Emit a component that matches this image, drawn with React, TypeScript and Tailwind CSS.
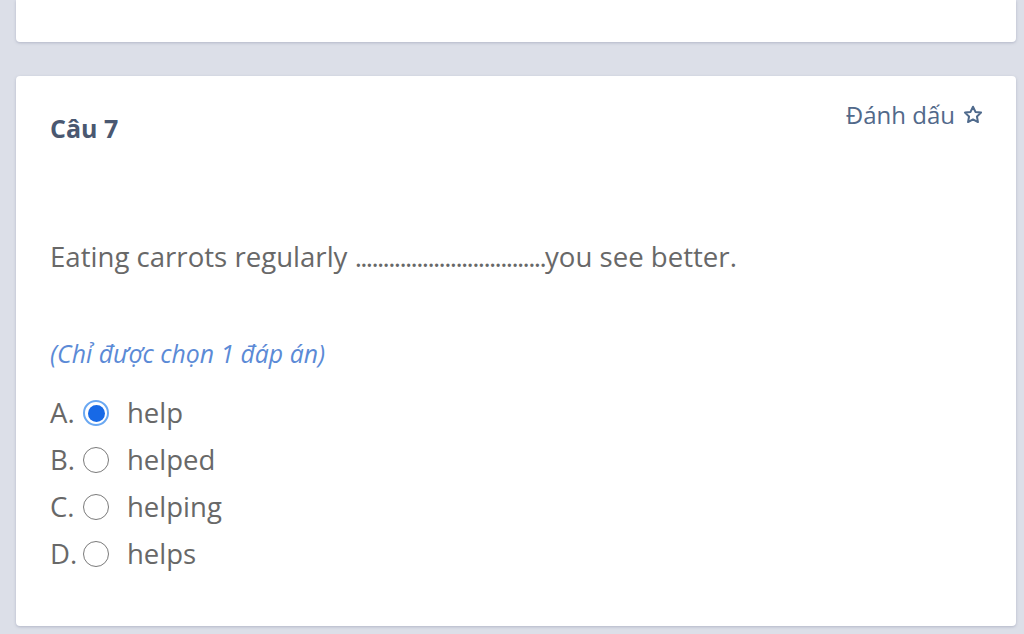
import React from "react";

const options = [
  { key: "A.", text: "help", selected: true },
  { key: "B.", text: "helped", selected: false },
  { key: "C.", text: "helping", selected: false },
  { key: "D.", text: "helps", selected: false },
];

function Star() {
  return (
    <svg width="22" height="22" viewBox="0 0 24 24" fill="none" stroke="#4f6a8c" strokeWidth="2.2" strokeLinejoin="round">
      <path d="M12 3l2.7 5.6 6.1.8-4.5 4.2 1.1 6.1L12 16.8 6.6 19.7l1.1-6.1-4.5-4.2 6.1-.8z" />
    </svg>
  );
}

export default function App() {
  return (
    <div
      className="w-[1024px] h-[634px] overflow-hidden bg-[#dcdfe8] pl-4 pr-[8px]"
      style={{ fontFamily: '"Open Sans", "Noto Sans", sans-serif' }}
    >
      <div className="h-[42px] bg-white rounded-b-[4px] shadow-[0_1px_3px_rgba(100,110,140,0.35)]" />
      <div className="mt-[34px] h-[550px] bg-white rounded-[4px] shadow-[0_1px_3px_rgba(100,110,140,0.35)] pl-[34px] pr-[32px] pt-[26px]">
        <div className="flex items-start justify-between">
          <div className="pt-[10px] text-[25px] font-bold text-[#4a5871] leading-[32px]">Câu 7</div>
          <div className="flex items-center gap-[7px] text-[24px] font-medium text-[#52698a] leading-[26px]">
            <span>Đánh dấu</span>
            <Star />
          </div>
        </div>
        <div className="mt-[94px] text-[27.6px] text-[#686868] leading-[36px]">
          Eating carrots regularly{" "}
          <span className="tracking-[-1.65px]">..................................</span>you see better.
        </div>
        <div className="mt-[63px] text-[24.8px] italic text-[#5b8ad6] leading-[32px]">(Chỉ được chọn 1 đáp án)</div>
        <div className="mt-[26px] flex flex-col gap-[11px]">
          {options.map((o) => (
            <div key={o.key} className="flex items-center h-[36px] text-[27.5px] text-[#686868]">
              <span className="w-[33px] font-medium">{o.key}</span>
              {o.selected ? (
                <span className="w-[26px] h-[26px] rounded-full border-[2px] border-[#6aa8f2] flex items-center justify-center">
                  <span className="w-[17px] h-[17px] rounded-full bg-[#1769e6]" />
                </span>
              ) : (
                <span className="w-[26px] h-[26px] rounded-full border-[1.5px] border-[#7a7a7a] bg-white" />
              )}
              <span className="ml-[18px]">{o.text}</span>
            </div>
          ))}
        </div>
      </div>
    </div>
  );
}
